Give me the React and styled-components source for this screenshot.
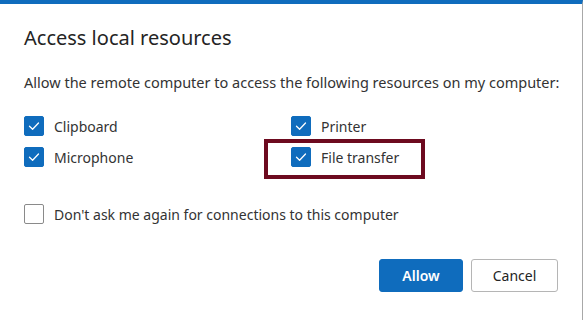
import React from "react";
import styled, { createGlobalStyle } from "styled-components";

const Global = createGlobalStyle`
  html, body { margin: 0; padding: 0; background: #ffffff; }
  body { font-family: "Noto Sans", "Open Sans", sans-serif; }
`;

const Dialog = styled.div`
  box-sizing: border-box;
  width: 583px;
  height: 320px;
  border-top: 4px solid #0f6cbd;
  border-right: 1px solid #a8a8a8;
  padding: 20px 0 0 24px;
  display: flex;
  flex-direction: column;
  color: #242424;
`;

const Title = styled.h1`
  margin: 0;
  font-size: 20px;
  font-weight: 400;
  line-height: 28px;
  color: #242424;
`;

const Description = styled.p`
  margin: 20px 0 0;
  font-size: 14.5px;
  line-height: 20px;
  color: #333;
`;

const Grid = styled.div`
  margin-top: 24px;
  display: grid;
  grid-template-columns: 267px 200px;
  row-gap: 11px;
`;

const Item = styled.label`
  position: relative;
  display: flex;
  align-items: center;
  gap: 10px;
  height: 20px;
  font-size: 14px;
  color: #333;
  width: max-content;
  ${(p) =>
    p.$highlight &&
    `
    &::after {
      content: "";
      position: absolute;
      left: -27px;
      top: -8px;
      right: -26px;
      bottom: -12px;
      border: 4px solid #6d0a1f;
    }
  `}
`;

const Box = styled.span`
  box-sizing: border-box;
  width: 20px;
  height: 20px;
  border-radius: 2px;
  display: inline-flex;
  align-items: center;
  justify-content: center;
  background: ${(p) => (p.$checked ? "#0f6cbd" : "#ffffff")};
  border: 1px solid ${(p) => (p.$checked ? "#0f6cbd" : "#8a8a8a")};
  flex: none;
`;

const Extra = styled.div`
  margin-top: 37px;
`;

const Footer = styled.div`
  margin-top: 35px;
  display: flex;
  justify-content: flex-end;
  gap: 8px;
  padding-right: 24px;
`;

const Button = styled.button`
  box-sizing: border-box;
  height: 33px;
  min-width: ${(p) => p.$w}px;
  border-radius: 3px;
  font-family: "Noto Sans", "Open Sans", sans-serif;
  font-size: 14px;
  font-weight: ${(p) => (p.$primary ? 600 : 400)};
  background: ${(p) => (p.$primary ? "#0f6cbd" : "#ffffff")};
  color: ${(p) => (p.$primary ? "#ffffff" : "#242424")};
  border: 1px solid ${(p) => (p.$primary ? "#0f6cbd" : "#b5b5b5")};
  padding: 0 12px;
`;

const Check = () => (
  <svg width="14" height="14" viewBox="0 0 14 14">
    <path d="M2.5 7.3 L5.6 10.2 L11.5 4" fill="none" stroke="#fff" strokeWidth="1.3" strokeLinecap="round" strokeLinejoin="round" />
  </svg>
);

const CheckItem = ({ label, checked, highlight }) => (
  <Item $highlight={highlight}>
    <Box $checked={checked}>{checked && <Check />}</Box>
    {label}
  </Item>
);

export default function App() {
  return (
    <>
      <Global />
      <Dialog>
        <Title>Access local resources</Title>
        <Description>
          Allow the remote computer to access the following resources on my computer:
        </Description>
        <Grid>
          <CheckItem label="Clipboard" checked />
          <CheckItem label="Printer" checked />
          <CheckItem label="Microphone" checked />
          <CheckItem label="File transfer" checked highlight />
        </Grid>
        <Extra>
          <CheckItem label="Don't ask me again for connections to this computer" />
        </Extra>
        <Footer>
          <Button $primary $w={84}>Allow</Button>
          <Button $w={87}>Cancel</Button>
        </Footer>
      </Dialog>
    </>
  );
}
